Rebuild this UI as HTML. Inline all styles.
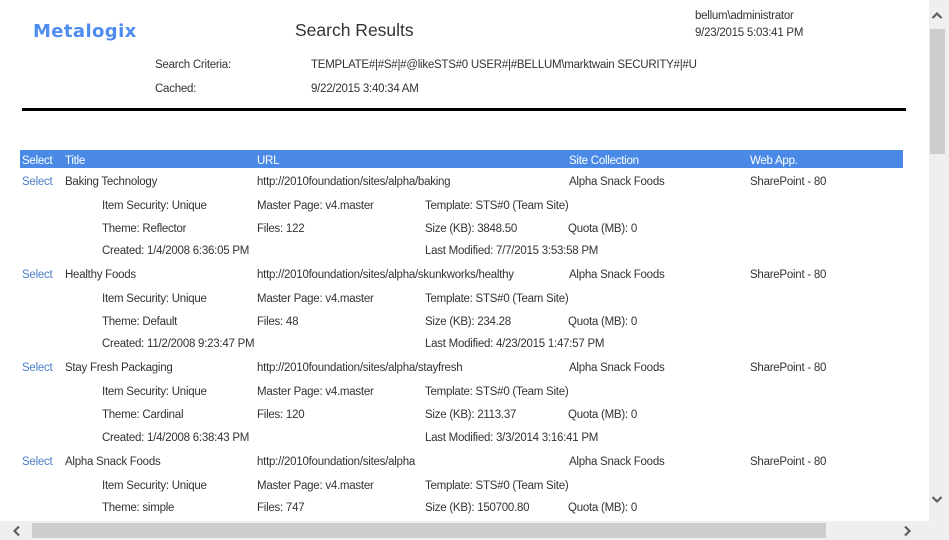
<!DOCTYPE html>
<html><head><meta charset="utf-8"><style>
html,body{margin:0;padding:0;width:949px;height:540px;overflow:hidden;background:#fff;}
body{position:relative;font-family:"Liberation Sans",sans-serif;font-size:11.5px;color:#333;letter-spacing:-0.25px;}
.t{position:absolute;white-space:nowrap;line-height:14px;margin-top:1px;}
.l{color:#4a7fc8;}
.h{color:#fff;}
</style></head><body>
<div class="t" style="left:33px;top:20px;line-height:22px;font-weight:bold;color:#4f8cf0;letter-spacing:0.4px;font-family:'DejaVu Sans',sans-serif;font-size:18px;">Metalogix</div>
<div class="t" style="left:295px;top:19px;font-size:17.5px;line-height:20px;color:#333;letter-spacing:0">Search Results</div>
<div class="t" style="left:695px;top:8px;">bellum\administrator</div>
<div class="t" style="left:695px;top:25px;">9/23/2015 5:03:41 PM</div>
<div class="t" style="left:155px;top:57px;">Search Criteria:</div>
<div class="t" style="left:311px;top:57px;">TEMPLATE#|#S#|#@likeSTS#0 USER#|#BELLUM\marktwain SECURITY#|#U</div>
<div class="t" style="left:155px;top:81px;">Cached:</div>
<div class="t" style="left:311px;top:81px;">9/22/2015 3:40:34 AM</div>
<div style="position:absolute;left:22px;top:108px;width:884px;height:3px;background:#000;"></div>
<div style="position:absolute;left:20px;top:150px;width:883px;height:18px;background:#4a8ae6;"></div>
<div class="t h" style="left:22px;top:153px;">Select</div>
<div class="t h" style="left:65px;top:153px;">Title</div>
<div class="t h" style="left:257px;top:153px;">URL</div>
<div class="t h" style="left:569px;top:153px;">Site Collection</div>
<div class="t h" style="left:750px;top:153px;">Web App.</div>

<div class="t l" style="left:22px;top:174px;">Select</div>
<div class="t" style="left:65px;top:174px;">Baking Technology</div>
<div class="t" style="left:257px;top:174px;">http://2010foundation/sites/alpha/baking</div>
<div class="t" style="left:569px;top:174px;">Alpha Snack Foods</div>
<div class="t" style="left:750px;top:174px;">SharePoint - 80</div>
<div class="t" style="left:102px;top:198px;">Item Security: Unique</div>
<div class="t" style="left:257px;top:198px;">Master Page: v4.master</div>
<div class="t" style="left:425px;top:198px;">Template: STS#0 (Team Site)</div>
<div class="t" style="left:102px;top:221px;">Theme: Reflector</div>
<div class="t" style="left:257px;top:221px;">Files: 122</div>
<div class="t" style="left:425px;top:221px;">Size (KB): 3848.50</div>
<div class="t" style="left:568px;top:221px;">Quota (MB): 0</div>
<div class="t" style="left:102px;top:243px;">Created: 1/4/2008 6:36:05 PM</div>
<div class="t" style="left:425px;top:243px;">Last Modified: 7/7/2015 3:53:58 PM</div>

<div class="t l" style="left:22px;top:267px;">Select</div>
<div class="t" style="left:65px;top:267px;">Healthy Foods</div>
<div class="t" style="left:257px;top:267px;">http://2010foundation/sites/alpha/skunkworks/healthy</div>
<div class="t" style="left:569px;top:267px;">Alpha Snack Foods</div>
<div class="t" style="left:750px;top:267px;">SharePoint - 80</div>
<div class="t" style="left:102px;top:291px;">Item Security: Unique</div>
<div class="t" style="left:257px;top:291px;">Master Page: v4.master</div>
<div class="t" style="left:425px;top:291px;">Template: STS#0 (Team Site)</div>
<div class="t" style="left:102px;top:314px;">Theme: Default</div>
<div class="t" style="left:257px;top:314px;">Files: 48</div>
<div class="t" style="left:425px;top:314px;">Size (KB): 234.28</div>
<div class="t" style="left:568px;top:314px;">Quota (MB): 0</div>
<div class="t" style="left:102px;top:336px;">Created: 11/2/2008 9:23:47 PM</div>
<div class="t" style="left:425px;top:336px;">Last Modified: 4/23/2015 1:47:57 PM</div>

<div class="t l" style="left:22px;top:360px;">Select</div>
<div class="t" style="left:65px;top:360px;">Stay Fresh Packaging</div>
<div class="t" style="left:257px;top:360px;">http://2010foundation/sites/alpha/stayfresh</div>
<div class="t" style="left:569px;top:360px;">Alpha Snack Foods</div>
<div class="t" style="left:750px;top:360px;">SharePoint - 80</div>
<div class="t" style="left:102px;top:384px;">Item Security: Unique</div>
<div class="t" style="left:257px;top:384px;">Master Page: v4.master</div>
<div class="t" style="left:425px;top:384px;">Template: STS#0 (Team Site)</div>
<div class="t" style="left:102px;top:407px;">Theme: Cardinal</div>
<div class="t" style="left:257px;top:407px;">Files: 120</div>
<div class="t" style="left:425px;top:407px;">Size (KB): 2113.37</div>
<div class="t" style="left:568px;top:407px;">Quota (MB): 0</div>
<div class="t" style="left:102px;top:430px;">Created: 1/4/2008 6:38:43 PM</div>
<div class="t" style="left:425px;top:430px;">Last Modified: 3/3/2014 3:16:41 PM</div>

<div class="t l" style="left:22px;top:454px;">Select</div>
<div class="t" style="left:65px;top:454px;">Alpha Snack Foods</div>
<div class="t" style="left:257px;top:454px;">http://2010foundation/sites/alpha</div>
<div class="t" style="left:569px;top:454px;">Alpha Snack Foods</div>
<div class="t" style="left:750px;top:454px;">SharePoint - 80</div>
<div class="t" style="left:102px;top:478px;">Item Security: Unique</div>
<div class="t" style="left:257px;top:478px;">Master Page: v4.master</div>
<div class="t" style="left:425px;top:478px;">Template: STS#0 (Team Site)</div>
<div class="t" style="left:102px;top:500px;">Theme: simple</div>
<div class="t" style="left:257px;top:500px;">Files: 747</div>
<div class="t" style="left:425px;top:500px;">Size (KB): 150700.80</div>
<div class="t" style="left:568px;top:500px;">Quota (MB): 0</div>

<div style="position:absolute;left:929px;top:0;width:20px;height:540px;background:#efefef;"></div>
<div style="position:absolute;left:930px;top:29px;width:15px;height:125px;background:#cdcdcd;"></div>
<svg style="position:absolute;left:931px;top:11px" width="12" height="10"><path d="M1.5 7 L6 2.5 L10.5 7" fill="none" stroke="#606060" stroke-width="2.2"/></svg>
<svg style="position:absolute;left:931px;top:494px" width="12" height="10"><path d="M1.5 3 L6 7.5 L10.5 3" fill="none" stroke="#606060" stroke-width="2.2"/></svg>
<div style="position:absolute;left:0;top:521px;width:929px;height:19px;background:#efefef;"></div>
<div style="position:absolute;left:32px;top:523px;width:794px;height:15px;background:#cdcdcd;"></div>
<svg style="position:absolute;left:12px;top:525px" width="10" height="12"><path d="M7 1.5 L2.5 6 L7 10.5" fill="none" stroke="#606060" stroke-width="2.2"/></svg>
<svg style="position:absolute;left:902px;top:525px" width="10" height="12"><path d="M3 1.5 L7.5 6 L3 10.5" fill="none" stroke="#606060" stroke-width="2.2"/></svg>
</body></html>
